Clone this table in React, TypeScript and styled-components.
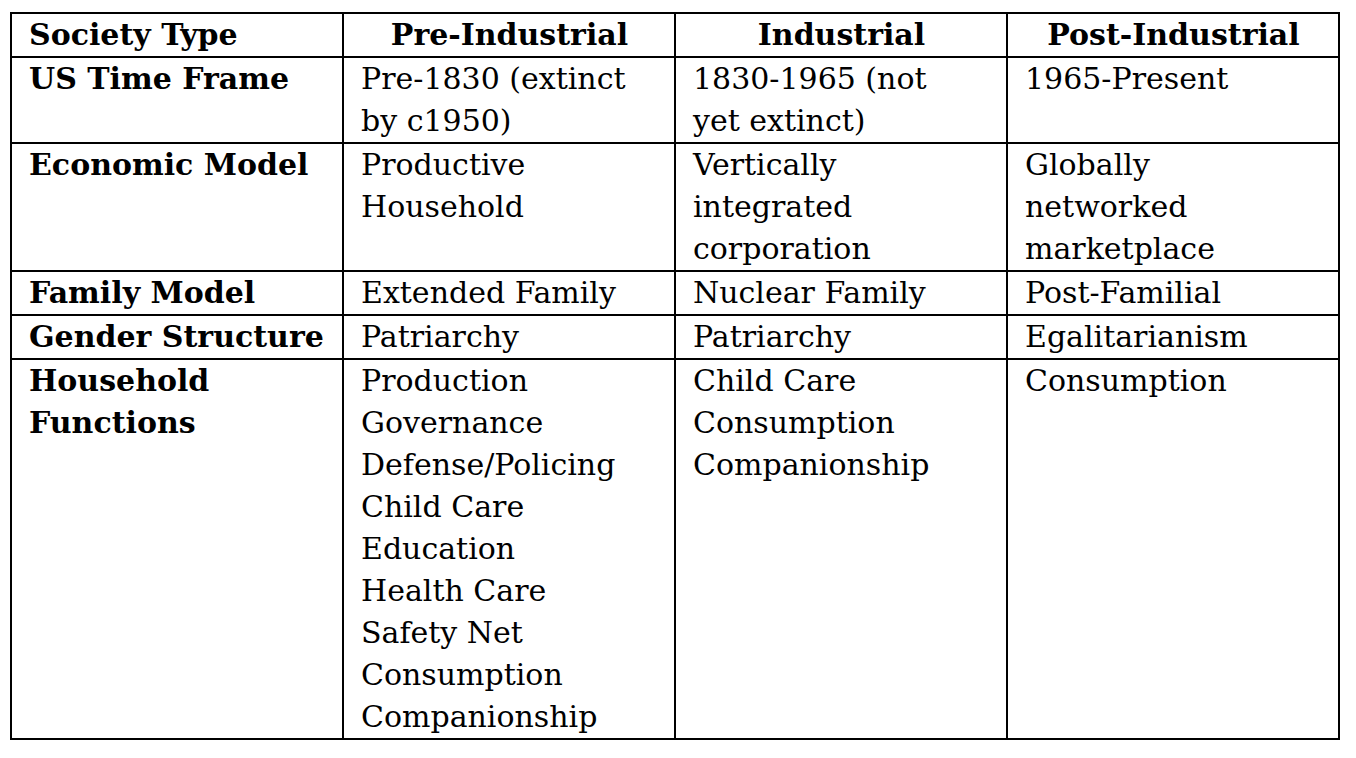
import styled, { createGlobalStyle } from "styled-components";

const GlobalStyle = createGlobalStyle`
  html, body {
    margin: 0;
    padding: 0;
    background: #ffffff;
  }
  body {
    font-family: "DejaVu Serif", "Liberation Serif", serif;
    color: #000000;
  }
`;

type Row = {
  label: string[];
  cells: string[][];
};

const columns = ["Pre-Industrial", "Industrial", "Post-Industrial"];

const rows: Row[] = [
  {
    label: ["US Time Frame"],
    cells: [
      ["Pre-1830 (extinct", "by c1950)"],
      ["1830-1965 (not", "yet extinct)"],
      ["1965-Present"],
    ],
  },
  {
    label: ["Economic Model"],
    cells: [
      ["Productive", "Household"],
      ["Vertically", "integrated", "corporation"],
      ["Globally", "networked", "marketplace"],
    ],
  },
  {
    label: ["Family Model"],
    cells: [["Extended Family"], ["Nuclear Family"], ["Post-Familial"]],
  },
  {
    label: ["Gender Structure"],
    cells: [["Patriarchy"], ["Patriarchy"], ["Egalitarianism"]],
  },
  {
    label: ["Household", "Functions"],
    cells: [
      [
        "Production",
        "Governance",
        "Defense/Policing",
        "Child Care",
        "Education",
        "Health Care",
        "Safety Net",
        "Consumption",
        "Companionship",
      ],
      ["Child Care", "Consumption", "Companionship"],
      ["Consumption"],
    ],
  },
];

function Lines({ lines }: { lines: string[] }) {
  return (
    <>
      {lines.map((line, i) => (
        <Line key={i}>{line}</Line>
      ))}
    </>
  );
}

export default function App() {
  return (
    <Page>
      <GlobalStyle />
      <Grid>
        <Cell $bold>Society Type</Cell>
        {columns.map((c) => (
          <Cell key={c} $bold $center>
            {c}
          </Cell>
        ))}
        {rows.map((row) => (
          <>
            <Cell key={row.label.join(" ")} $bold>
              <Lines lines={row.label} />
            </Cell>
            {row.cells.map((lines, i) => (
              <Cell key={row.label.join(" ") + i}>
                <Lines lines={lines} />
              </Cell>
            ))}
          </>
        ))}
      </Grid>
    </Page>
  );
}

const Page = styled.div`
  padding: 12px 0 0 10px;
`;

const Grid = styled.div`
  width: 1330px;
  box-sizing: border-box;
  display: grid;
  grid-template-columns: repeat(4, 1fr);
  gap: 2px;
  padding: 2px;
  background: #000000;
`;

const Cell = styled.div<{ $bold?: boolean; $center?: boolean }>`
  background: #ffffff;
  padding: 0 16px 0 17px;
  font-size: 30px;
  line-height: 42px;
  font-weight: ${(p) => (p.$bold ? 700 : 400)};
  text-align: ${(p) => (p.$center ? "center" : "left")};
  white-space: nowrap;
`;

const Line = styled.div``;
